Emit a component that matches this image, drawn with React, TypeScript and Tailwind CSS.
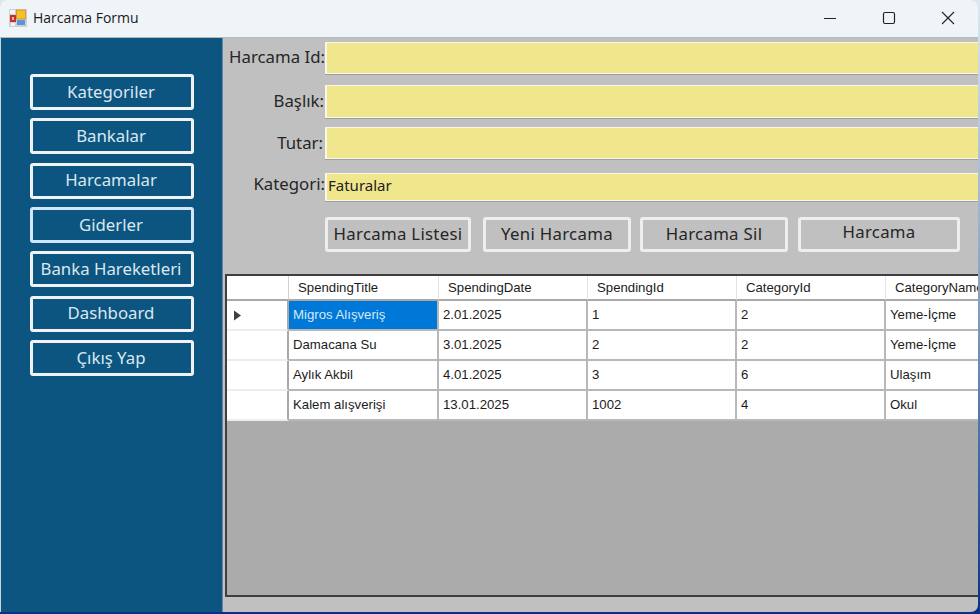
import React from "react";

const sideItems: { label: string; focus?: boolean }[] = [
  { label: "Kategoriler" },
  { label: "Bankalar" },
  { label: "Harcamalar" },
  { label: "Giderler", focus: true },
  { label: "Banka Hareketleri" },
  { label: "Dashboard" },
  { label: "Çıkış Yap" },
];

const fields = [
  { label: "Harcama Id:", h: "h-[32px]", mt: "mt-[4px]", pr: "pr-0", lift: "pb-[1px]", value: "" },
  { label: "Başlık:", h: "h-[33px]", mt: "mt-[11px]", pr: "pr-[1px]", lift: "", value: "" },
  { label: "Tutar:", h: "h-[32px]", mt: "mt-[9px]", pr: "pr-[2px]", lift: "", value: "" },
  { label: "Kategori:", h: "h-[28px]", mt: "mt-[14px]", pr: "pr-0", lift: "pb-[5px]", value: "Faturalar" },
];

const columns = ["SpendingTitle", "SpendingDate", "SpendingId", "CategoryId", "CategoryName"];
const rows = [
  ["Migros Alışveriş", "2.01.2025", "1", "2", "Yeme-İçme"],
  ["Damacana Su", "3.01.2025", "2", "2", "Yeme-İçme"],
  ["Aylık Akbil", "4.01.2025", "3", "6", "Ulaşım"],
  ["Kalem alışverişi", "13.01.2025", "1002", "4", "Okul"],
];

const rowClass = "grid grid-cols-[62px_150px_149px_149px_149px_92px] w-[751px]";

function AppIcon() {
  return (
    <svg width="18" height="18" viewBox="0 0 18 18">
      <rect x="0" y="0" width="18" height="18" fill="#cfcfcf" />
      <rect x="1" y="1" width="5" height="4" fill="#f4f4f4" />
      <rect x="1" y="6" width="6" height="7" fill="#c8322c" />
      <rect x="3" y="8" width="2" height="3" fill="#f3b0a8" />
      <rect x="7.5" y="1" width="9" height="9" fill="#f5c02c" stroke="#c98e12" strokeWidth="0.7" />
      <rect x="8" y="11" width="8" height="5" fill="#5b93e0" />
      <rect x="2" y="14" width="4" height="3" fill="#f4f4f4" />
    </svg>
  );
}

export default function App() {
  return (
    <div className="w-[980px] h-[614px] overflow-hidden bg-gradient-to-b from-[#dfe8f0] via-[#7f9fc4] to-[#0b2f86]" style={{ fontFamily: '"Noto Sans", sans-serif' }}>
      <div className="w-[978px] h-[612px] flex flex-col rounded-t-[7px] rounded-br-[7px] overflow-hidden bg-[#c0c0c0]">
        <header className="h-[38px] shrink-0 bg-[#eff4f9] border-b border-[#b5b9bd] flex items-center pl-[9px] pb-[2px] text-[#1a1a1a]">
          <AppIcon />
          <span className="ml-[6px] text-[14px] leading-none" style={{ fontFamily: '"Open Sans", sans-serif' }}>Harcama Formu</span>
          <div className="ml-auto flex items-center">
            <svg width="14" height="14" viewBox="0 0 14 14" className="mr-[45px]"><path d="M1 7.5H13" stroke="#222" strokeWidth="1.2" /></svg>
            <svg width="14" height="14" viewBox="0 0 14 14" className="mr-[45px]"><rect x="1.5" y="1.5" width="11" height="11" rx="1.5" fill="none" stroke="#222" strokeWidth="1.2" /></svg>
            <svg width="14" height="14" viewBox="0 0 14 14" className="mr-[23px]"><path d="M1 1L13 13M13 1L1 13" stroke="#222" strokeWidth="1.1" /></svg>
          </div>
        </header>
        <div className="flex flex-1 min-h-0 border-l border-[#c9d3da]">
          <aside className="w-[222px] shrink-0 bg-[#0b5580] border-r border-[#5f8ba6] pt-[36px] pl-[29px] flex flex-col gap-[8.33px]">
            {sideItems.map((s) => (
              <button
                key={s.label}
                className={`w-[164px] h-[36px] shrink-0 rounded-[3px] border-[3px] bg-[#0b5580] text-[16.8px] leading-none text-[#dbe7ef] whitespace-nowrap pr-[2px] ${s.focus ? "border-[#cfe6fb]" : "border-[#f0f2f3]"}`}
              >
                {s.label}
              </button>
            ))}
          </aside>
          <main className="flex-1 min-w-0 overflow-hidden">
            <div>
              {fields.map((f) => (
                <div key={f.label} className={`flex items-center ${f.mt}`}>
                  <label className={`w-[102px] shrink-0 text-right text-[16.8px] leading-none text-[#262626] whitespace-nowrap ${f.pr} ${f.lift}`}>{f.label}</label>
                  <div className={`flex-1 ${f.h} bg-[#f0e68c] border-y border-l-2 border-[#f9f7ec] shadow-[0_1px_0_#9e9e9e] text-[15px] flex items-center text-[#222] pl-[1px] pb-[4px]`}>{f.value}</div>
                </div>
              ))}
            </div>
            <div className="flex mt-[16px] ml-[102px] h-[35px] text-[16.8px] text-[#262626] tracking-[0.3px]">
              <button className="w-[146px] rounded-[3px] border-[3px] border-[#eeeeee] leading-none whitespace-nowrap">Harcama Listesi</button>
              <button className="w-[148px] ml-[12px] rounded-[3px] border-[3px] border-[#eeeeee] leading-none whitespace-nowrap">Yeni Harcama</button>
              <button className="w-[148px] ml-[9px] rounded-[3px] border-[3px] border-[#eeeeee] leading-none whitespace-nowrap">Harcama Sil</button>
              <button className="w-[162px] ml-[10px] rounded-[3px] border-[3px] border-[#eeeeee] leading-none pb-[5px]">Harcama</button>
            </div>
            <div className="mt-[22px] ml-[2px] w-[753px] h-[323px] bg-[#ababab] border-y-2 border-l-2 border-[#3f3f3f] overflow-hidden text-[13.2px] text-[#1c1c1c]" style={{ fontFamily: '"Liberation Sans", sans-serif' }}>
              <div className={`${rowClass} h-[25px] bg-white`}>
                <div className="border-r border-b-2 border-r-[#d0d0d0] border-b-[#a8a8a8]" />
                {columns.map((c, j) => (
                  <div key={c} className={`border-b-2 border-r-[#e3e3e3] border-b-[#a8a8a8] pl-[9px] flex items-center whitespace-nowrap ${j < 4 ? "border-r" : ""}`}>{c}</div>
                ))}
              </div>
              {rows.map((r, i) => (
                <div key={r[0]} className={`${rowClass} h-[30px] bg-white`}>
                  <div className="border-r-2 border-b-2 border-r-[#a8a8a8] border-b-[#ececec] flex items-center pl-[6px]">
                    {i === 0 && (
                      <svg width="9" height="11" viewBox="0 0 9 11"><path d="M1 0.5L8 5.5L1 10.5Z" fill="#404040" /></svg>
                    )}
                  </div>
                  {r.map((cell, j) => (
                    <div
                      key={j}
                      className={`border-b-2 border-[#b8b8b8] pl-[4px] flex items-center whitespace-nowrap overflow-hidden ${j < 4 ? "border-r-2" : ""} ${i === 0 && j === 0 ? "bg-[#0078d7] text-[#d8e9f8]" : ""}`}
                    >
                      {cell}
                    </div>
                  ))}
                </div>
              ))}
            </div>
          </main>
        </div>
      </div>
    </div>
  );
}
